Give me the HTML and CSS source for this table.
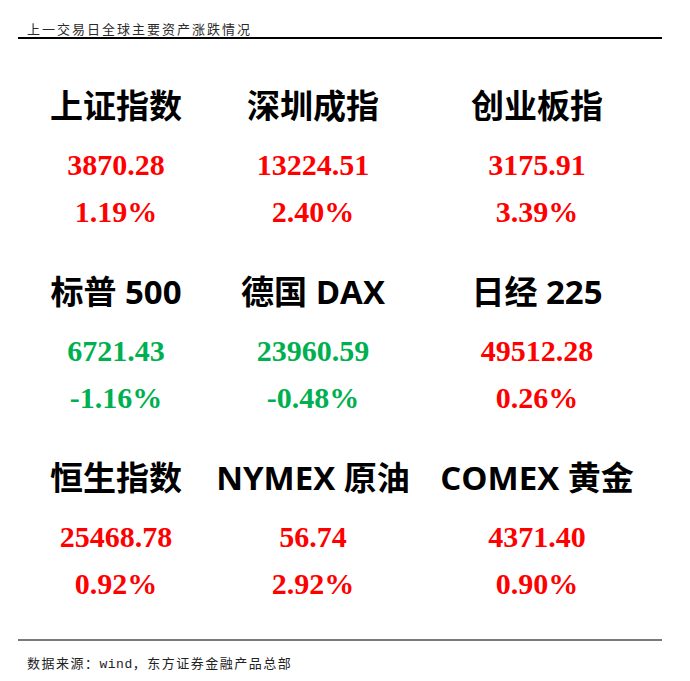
FILE: index.html
```html
<!DOCTYPE html>
<html lang="zh-CN">
<head>
<meta charset="utf-8">
<title>上一交易日全球主要资产涨跌情况</title>
<link rel="stylesheet" href="styles.css">
</head>
<body>
<div class="page">
  <div class="header">上一交易日全球主要资产涨跌情况</div>
  <div class="grid">
    <div class="cell"><div class="title">上证指数</div><div class="num up">3870.28</div><div class="pct up">1.19%</div></div>
    <div class="cell"><div class="title">深圳成指</div><div class="num up">13224.51</div><div class="pct up">2.40%</div></div>
    <div class="cell"><div class="title">创业板指</div><div class="num up">3175.91</div><div class="pct up">3.39%</div></div>

    <div class="cell"><div class="title">标普 500</div><div class="num down">6721.43</div><div class="pct down">-1.16%</div></div>
    <div class="cell"><div class="title">德国 DAX</div><div class="num down">23960.59</div><div class="pct down">-0.48%</div></div>
    <div class="cell"><div class="title">日经 225</div><div class="num up">49512.28</div><div class="pct up">0.26%</div></div>

    <div class="cell"><div class="title">恒生指数</div><div class="num up">25468.78</div><div class="pct up">0.92%</div></div>
    <div class="cell"><div class="title">NYMEX 原油</div><div class="num up">56.74</div><div class="pct up">2.92%</div></div>
    <div class="cell"><div class="title">COMEX 黄金</div><div class="num up">4371.40</div><div class="pct up">0.90%</div></div>
  </div>
  <div class="footer">数据来源：<span class="mono">wind</span>，东方证券金融产品总部</div>
</div>
</body>
</html>
```

FILE: styles.css
```css
html, body {
  margin: 0;
  padding: 0;
  background: #ffffff;
}

.page {
  width: 644px;
  margin-left: 18px;
  font-family: "Noto Sans CJK SC", "Noto Sans", sans-serif;
}

.header {
  padding-top: 20px;
  padding-left: 9px;
  font-size: 13px;
  line-height: 17px;
  letter-spacing: 2px;
  color: #2a2a2a;
  border-bottom: 2px solid #000000;
}

.grid {
  margin-top: 47px;
  display: grid;
  grid-template-columns: 196px 198px 250px;
  row-gap: 37px;
}

.cell {
  text-align: center;
}

.title {
  font-family: "Open Sans", "Noto Sans CJK SC", sans-serif;
  font-weight: 700;
  font-size: 33px;
  line-height: 40px;
  color: #000000;
  margin-bottom: 15px;
  white-space: nowrap;
}

.num, .pct {
  font-family: "Liberation Serif", "Times New Roman", serif;
  font-weight: 700;
  font-size: 30px;
  line-height: 47px;
}

.up { color: #ff0000; }
.down { color: #00b050; }

.footer {
  margin-top: 32px;
  border-top: 2px solid #7a7a7a;
  padding-top: 13px;
  padding-left: 9px;
  font-size: 13px;
  line-height: 17px;
  letter-spacing: 1.5px;
  color: #222222;
}

.mono {
  font-family: "Liberation Mono", "DejaVu Sans Mono", monospace;
  letter-spacing: 0.5px;
}
```
